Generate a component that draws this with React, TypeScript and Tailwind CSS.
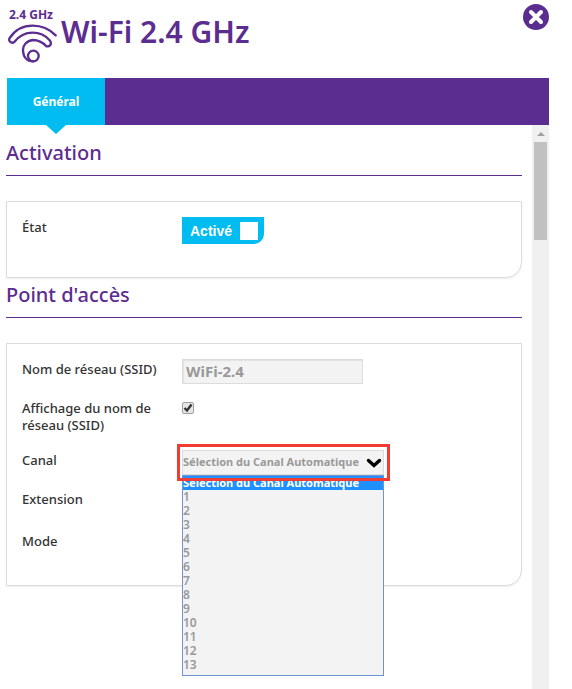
import { useState } from "react";

const channels = ["Sélection du Canal Automatique", "1", "2", "3", "4", "5", "6", "7", "8", "9", "10", "11", "12", "13"];

const WifiIcon = () => (
  <svg viewBox="21 69 150 120" className="w-[50px] h-10" fill="none" stroke="#5c2d91" strokeWidth="7" strokeLinecap="round" aria-hidden="true">
    <path d="M167 106C148 87 124 77 98 77C70 77 45 90 29 114C24 123 34 132 43 126C57 108 76 98 98 98C118 98 136 106 149 121C157 131 150 141 139 139C128 127 113 120 99 120C80 122 68 136 69 152C70 172 82 184 99 184" />
    <circle cx="100" cy="168" r="16" />
  </svg>
);

const Header = () => (
  <header className="flex justify-between items-start h-[78px] pl-[7px]">
    <div className="flex">
      <div className="flex flex-col w-[54px] pt-1.5">
        <span className="pl-0.5 text-xs leading-[17px] font-bold whitespace-nowrap">2.4 GHz</span>
        <WifiIcon />
      </div>
      <h1 className="pt-3 text-[30px] leading-10 font-semibold">Wi-Fi 2.4 GHz</h1>
    </div>
    <button type="button" aria-label="Fermer" className="mt-1 size-[26px] rounded-full bg-[#5c2d91]">
      <svg viewBox="0 0 26 26" fill="none" stroke="#fff" strokeWidth="4" strokeLinecap="round">
        <path d="M8 8L18 18M18 8L8 18" />
      </svg>
    </button>
  </header>
);

const Tabs = () => (
  <nav className="flex h-[47px] ml-[7px] bg-[#5c2d91]">
    <a
      href="#general"
      aria-current="page"
      className="relative flex items-center justify-center w-[98px] bg-[#00bcf1] text-white text-xs font-bold"
    >
      Général
      <svg viewBox="0 0 20 9" className="absolute top-full left-[39px] w-5 h-[9px]" fill="#00bcf1" aria-hidden="true">
        <path d="M0 0H20L10 9Z" />
      </svg>
    </a>
  </nav>
);

const Switch = () => {
  const [active, setActive] = useState(true);

  return (
    <button
      type="button"
      role="switch"
      aria-checked={active}
      aria-labelledby="etat"
      onClick={() => setActive(!active)}
      className="flex items-center justify-between w-[82px] h-[27px] pl-2 pr-1.5 rounded-br-[10px] bg-[#00bcf1] text-white text-sm font-bold font-['Liberation_Sans',sans-serif]"
    >
      {active ? "Activé" : "Inactif"}
      <span className="size-[18px] bg-white" />
    </button>
  );
};

const ChannelSelect = () => {
  const [channel, setChannel] = useState(channels[0]);

  return (
    <div className="relative w-[202px] h-[25px]">
      <select
        id="canal"
        value={channel}
        onChange={(e) => setChannel(e.target.value)}
        className="block appearance-none w-full h-full pb-0.5 border border-[#dcdcdc] bg-[#f3f3f3] text-[#999] text-[11px] font-bold"
      >
        {channels.map((c) => (
          <option key={c}>{c}</option>
        ))}
      </select>
      <svg viewBox="0 0 16 10" className="absolute right-0.5 top-2 w-4 h-2.5 pointer-events-none" fill="none" stroke="#000" strokeWidth="3.4" strokeLinecap="round" aria-hidden="true">
        <path d="M2.5 2.5L8 7.5L13.5 2.5" />
      </svg>
      <ul
        role="listbox"
        aria-label="Canal"
        className="absolute left-0 top-full w-full pb-[3px] border border-[#6f94d2] bg-[#f3f3f3] text-[#999] text-xs leading-[14px] font-semibold"
      >
        {channels.map((c) => (
          <li
            key={c}
            role="option"
            aria-selected={c === channel}
            onClick={() => setChannel(c)}
            className={c === channel ? "bg-[#1e90ff] text-white text-[11px] leading-[14px] font-bold" : ""}
          >
            {c}
          </li>
        ))}
      </ul>
      <div className="absolute -left-[5px] -right-1.5 -inset-y-1.5 border-3 border-[#f03c32] pointer-events-none" />
    </div>
  );
};

const rowClass = "grid grid-cols-[144px_1fr] gap-x-4 items-start";
const cardClass = "mt-[25px] px-[15px] border border-[#dcdcdc] rounded-br-[16px] shadow-[0_1px_2px_rgba(0,0,0,0.08)] text-[13px] leading-[17px] font-medium text-[#333]";

const App = () => {
  const [visible, setVisible] = useState(true);

  return (
    <div className="flex flex-col min-h-screen pr-[23px] bg-white text-[#5c2d91] font-['Noto_Sans',sans-serif]">
      <Header />
      <Tabs />
      <div className="flex flex-1">
        <main className="flex-1 pl-1.5 pr-2.5">
          <section>
            <h2 className="h-[51px] pt-3.5 border-b border-[#5c2d91] text-xl leading-7 font-medium">Activation</h2>
            <div className={`${cardClass} h-[77px] pt-[15px]`}>
              <div className={rowClass}>
                <span id="etat" className="pt-0.5">État</span>
                <Switch />
              </div>
            </div>
          </section>

          <section>
            <h2 className="h-10 pt-[3px] border-b border-[#5c2d91] text-xl leading-7 font-medium">Point d'accès</h2>
            <div className={`${cardClass} flex flex-col gap-4 pt-[15px] pb-[35px]`}>
              <div className={rowClass}>
                <label htmlFor="ssid" className="pt-0.5 whitespace-nowrap">Nom de réseau (SSID)</label>
                <input
                  id="ssid"
                  defaultValue="WiFi-2.4"
                  className="w-[181px] h-[25px] px-[3px] pb-0.5 border border-[#dcdcdc] bg-[#f3f3f3] text-[#999] text-[15px] font-bold shadow-[inset_1px_1px_1px_#e2e2e2]"
                />
              </div>
              <div className={rowClass}>
                <label htmlFor="affichage">Affichage du nom de réseau (SSID)</label>
                <div className="relative mt-0.5 size-3">
                  <input
                    id="affichage"
                    type="checkbox"
                    checked={visible}
                    onChange={() => setVisible(!visible)}
                    className="block appearance-none size-3 border border-[#a0a0a0] rounded-xs bg-[#e6e6e6]"
                  />
                  {visible && (
                    <svg viewBox="0 0 12 12" className="absolute inset-0 pointer-events-none" fill="none" stroke="#333" strokeWidth="2.4" aria-hidden="true">
                      <path d="M2.5 6L5 8.5L9.5 2.5" />
                    </svg>
                  )}
                </div>
              </div>
              <div className={rowClass}>
                <label htmlFor="canal" className="pt-0.5">Canal</label>
                <ChannelSelect />
              </div>
              <div className={`${rowClass} h-[26px]`}>
                <span>Extension</span>
              </div>
              <div className={rowClass}>
                <span>Mode</span>
              </div>
            </div>
          </section>
        </main>

        {/* scrollbar */}
        <div className="flex flex-col items-center w-[17px] bg-[#f0f0f0]">
          <div className="flex items-center justify-center h-[17px]">
            <svg viewBox="0 0 8 4" className="w-2 h-1" fill="#a0a0a0" aria-hidden="true">
              <path d="M4 0L8 4H0Z" />
            </svg>
          </div>
          <div className="w-[13px] h-[98px] bg-[#c1c1c1]" />
        </div>
      </div>
    </div>
  );
};

export default App;
